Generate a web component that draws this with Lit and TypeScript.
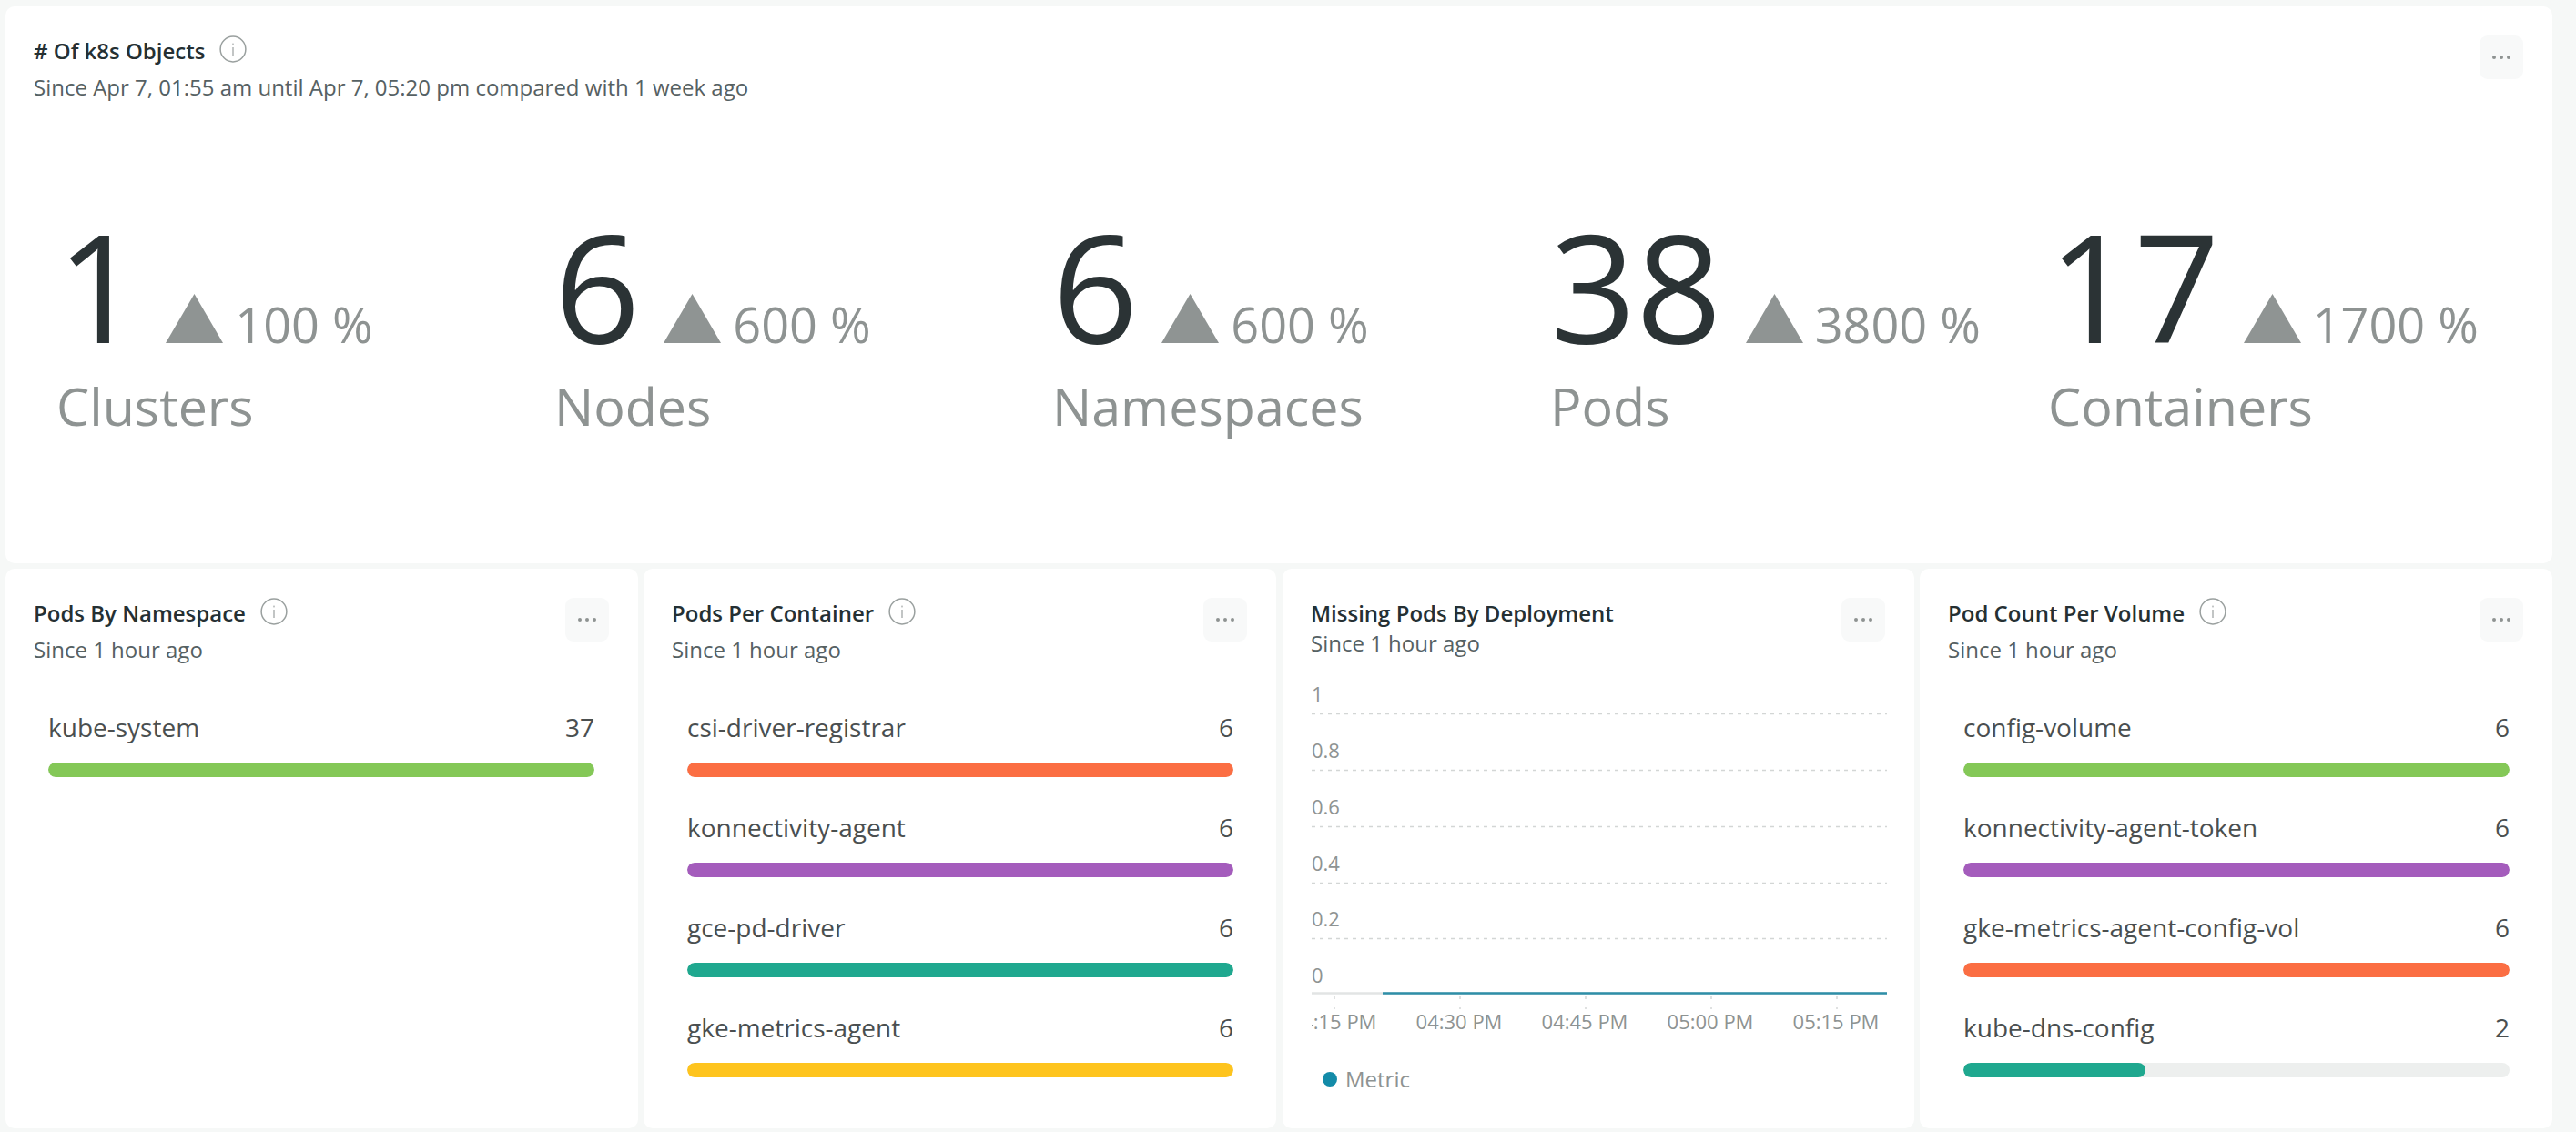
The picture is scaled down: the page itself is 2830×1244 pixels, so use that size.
import { LitElement, html, css, svg } from 'lit';
import { customElement } from 'lit/decorators.js';

const C = {
  green: '#84c857',
  purple: '#a45cbc',
  orange: '#fb6e43',
  teal: '#1fa88f',
  yellow: '#fec41e',
};

const stats = [
  { value: '1', pct: '100 %', label: 'Clusters' },
  { value: '6', pct: '600 %', label: 'Nodes' },
  { value: '6', pct: '600 %', label: 'Namespaces' },
  { value: '38', pct: '3800 %', label: 'Pods' },
  { value: '17', pct: '1700 %', label: 'Containers' },
];

const infoIcon = html`<svg class="info" width="30" height="30" viewBox="0 0 30 30" fill="none">
  <circle cx="15" cy="15" r="13.9" stroke="#9aa09f" stroke-width="1.5"></circle>
  <rect x="14.4" y="13" width="1.2" height="9" fill="#9aa09f"></rect>
  <rect x="14.4" y="8.6" width="1.2" height="1.8" fill="#9aa09f"></rect>
</svg>`;

const menu = html`<div class="menu">
  <svg width="22" height="6" viewBox="0 0 22 6">
    <circle cx="3" cy="3" r="2" fill="#8e9392"></circle>
    <circle cx="11" cy="3" r="2" fill="#8e9392"></circle>
    <circle cx="19" cy="3" r="2" fill="#8e9392"></circle>
  </svg>
</div>`;

function header(title: string, sub: string, info = true, tight = false) {
  return html`<div class="head">
    <div>
      <div class="title">${title}${info ? infoIcon : ''}</div>
      <div class="sub ${tight ? 'tight' : ''}">${sub}</div>
    </div>
    ${menu}
  </div>`;
}

function barList(rows: { name: string; n: number; pct: number; color: string }[]) {
  return html`<div class="rows">
    ${rows.map(
      (r) => html`<div class="row">
        <div class="row-text"><span>${r.name}</span><span>${r.n}</span></div>
        <div class="track"><div class="fill" style="width:${r.pct}%;background:${r.color}"></div></div>
      </div>`
    )}
  </div>`;
}

const yTicks = [
  { t: '1', y: 44 },
  { t: '0.8', y: 106 },
  { t: '0.6', y: 168 },
  { t: '0.4', y: 230 },
  { t: '0.2', y: 291 },
];
const xTicks = [
  { t: '04:15 PM', x: 25 },
  { t: '04:30 PM', x: 163 },
  { t: '04:45 PM', x: 301 },
  { t: '05:00 PM', x: 439 },
  { t: '05:15 PM', x: 577 },
];

function chart() {
  return svg`<svg class="chart" width="632" height="402" viewBox="0 0 632 402">
    ${yTicks.map(
      (g) => svg`<line x1="0" x2="632" y1=${g.y + 0.5} y2=${g.y + 0.5} stroke="#d3d6d5" stroke-width="1.5" stroke-dasharray="4 5"></line>
        <text class="tick" x="0" y=${g.y - 13}>${g.t}</text>`
    )}
    <text class="tick" x="0" y="340">0</text>
    <line x1="0" x2="632" y1="351.5" y2="351.5" stroke="#e2e4e4" stroke-width="2.5"></line>
    <line x1="78" x2="632" y1="351.5" y2="351.5" stroke="#2e8fa8" stroke-width="2.5"></line>
    ${xTicks.map(
      (t) => svg`<line x1=${t.x} x2=${t.x} y1="354" y2="369" stroke="#d5d8d7" stroke-width="1.5" stroke-dasharray="4 9"></line>
        <text class="tick" x=${t.x - 1} y="391" text-anchor="middle">${t.t}</text>`
    )}
  </svg>`;
}

@customElement('app-root')
export class AppRoot extends LitElement {
  static styles = css`
    :host {
      display: block;
      width: 2830px;
      height: 1244px;
      box-sizing: border-box;
      padding: 7px 26px 4px 6px;
      background: #f6f8f7;
      font-family: 'Open Sans', sans-serif;
      overflow: hidden;
    }
    .card {
      background: #fff;
      border-radius: 10px;
      box-sizing: border-box;
      padding: 33px 32px 0 31px;
    }
    .top {
      height: 612px;
      margin-bottom: 6px;
    }
    .grid {
      display: grid;
      grid-template-columns: repeat(4, 695px);
      gap: 6px;
      height: 615px;
    }
    .shifted {
      margin-left: 1px;
    }
    .head {
      display: flex;
      justify-content: space-between;
      align-items: flex-start;
    }
    .title {
      display: flex;
      align-items: center;
      gap: 16px;
      height: 30px;
      font-size: 24px;
      font-weight: 600;
      color: #253033;
    }
    .info {
      flex: none;
      margin-top: -2px;
    }
    .sub {
      margin-top: 11px;
      line-height: 30px;
      font-size: 24px;
      color: #566163;
    }
    .sub.tight {
      margin-top: 4px;
    }
    .menu {
      width: 48px;
      height: 48px;
      margin-top: -1px;
      border-radius: 9px;
      background: #f8f9f9;
      display: flex;
      align-items: center;
      justify-content: center;
      flex: none;
    }
    .stats {
      display: grid;
      grid-template-columns: repeat(5, 547px);
      margin: 120px 0 0 25px;
    }
    .num-line {
      display: flex;
      align-items: baseline;
      height: 165px;
    }
    .num {
      font-size: 165px;
      line-height: 165px;
      font-weight: 400;
      color: #2b3335;
      margin-right: 26px;
    }
    .tri {
      margin-right: 13px;
    }
    .pct {
      font-size: 54px;
      line-height: 60px;
      font-weight: 400;
      color: #8e9392;
    }
    .label {
      margin-top: 15px;
      font-size: 57.4px;
      line-height: 70px;
      font-weight: 400;
      color: #8e9392;
    }
    .rows {
      margin: 50px 15px 0 17px;
      display: flex;
      flex-direction: column;
      gap: 35px;
    }
    .first .rows {
      margin-left: 16px;
      margin-right: 16px;
    }
    .row-text {
      display: flex;
      justify-content: space-between;
      height: 40px;
      line-height: 40px;
      font-size: 28px;
      color: #4a4f50;
    }
    .track {
      margin-top: 19px;
      height: 16px;
      border-radius: 8px;
      background: #edefee;
      overflow: hidden;
    }
    .fill {
      height: 100%;
      border-radius: 8px;
    }
    .chart {
      display: block;
      margin: 18px 0 0 1px;
    }
    .tick {
      font-family: 'Open Sans', sans-serif;
      font-size: 22px;
      fill: #8e9392;
    }
    .legend {
      display: flex;
      align-items: center;
      gap: 9px;
      margin: 29px 0 0 13px;
      font-size: 24px;
      line-height: 30px;
      color: #8e9392;
    }
    .dot {
      width: 16px;
      height: 16px;
      border-radius: 50%;
      background: #138ba8;
    }
  `;

  render() {
    return html`
      <div class="card top">
        ${header('# Of k8s Objects', 'Since Apr 7, 01:55 am until Apr 7, 05:20 pm compared with 1 week ago')}
        <div class="stats">
          ${stats.map(
            (s) => html`<div>
              <div class="num-line">
                <span class="num">${s.value}</span>
                <svg class="tri" width="63" height="54" viewBox="0 0 63 54"><path d="M31.5 0L63 54H0z" fill="#8f9493"></path></svg>
                <span class="pct">${s.pct}</span>
              </div>
              <div class="label">${s.label}</div>
            </div>`
          )}
        </div>
      </div>
      <div class="grid">
        <div class="card first">
          ${header('Pods By Namespace', 'Since 1 hour ago')}
          ${barList([{ name: 'kube-system', n: 37, pct: 100, color: C.green }])}
        </div>
        <div class="card">
          ${header('Pods Per Container', 'Since 1 hour ago')}
          ${barList([
            { name: 'csi-driver-registrar', n: 6, pct: 100, color: C.orange },
            { name: 'konnectivity-agent', n: 6, pct: 100, color: C.purple },
            { name: 'gce-pd-driver', n: 6, pct: 100, color: C.teal },
            { name: 'gke-metrics-agent', n: 6, pct: 100, color: C.yellow },
          ])}
        </div>
        <div class="card shifted">
          ${header('Missing Pods By Deployment', 'Since 1 hour ago', false, true)}
          ${chart()}
          <div class="legend"><span class="dot"></span>Metric</div>
        </div>
        <div class="card">
          ${header('Pod Count Per Volume', 'Since 1 hour ago')}
          ${barList([
            { name: 'config-volume', n: 6, pct: 100, color: C.green },
            { name: 'konnectivity-agent-token', n: 6, pct: 100, color: C.purple },
            { name: 'gke-metrics-agent-config-vol', n: 6, pct: 100, color: C.orange },
            { name: 'kube-dns-config', n: 2, pct: 33.3, color: C.teal },
          ])}
        </div>
      </div>
    `;
  }
}
